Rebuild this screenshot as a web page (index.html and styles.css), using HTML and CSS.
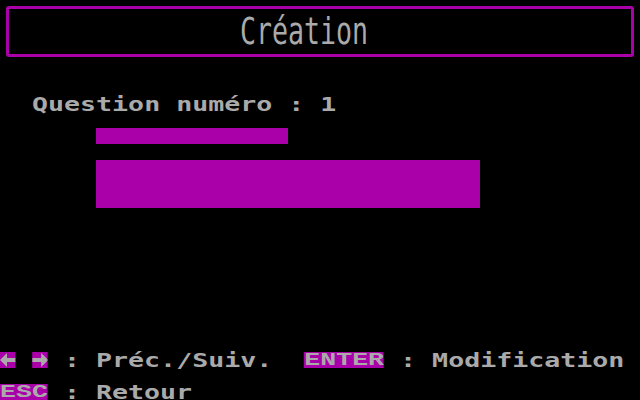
FILE: index.html
```html
<!DOCTYPE html>
<html lang="fr">
<head>
  <meta charset="UTF-8">
  <title>Création</title>
  <link rel="stylesheet" href="styles.css">
</head>
<body>
  <div class="title-box">
    <span class="title">Création</span>
  </div>

  <div class="row question">  Question numéro : 1</div>
  <div class="bar bar-short"></div>
  <div class="bar bar-long"></div>

  <footer class="help">
    <div class="row"><span class="key"><svg viewBox="0 0 16 16" preserveAspectRatio="none"><rect x="3" y="6" width="13" height="4"/><polygon points="0,8 7,1 7,15"/></svg></span> <span class="key"><svg viewBox="0 0 16 16" preserveAspectRatio="none"><rect x="0" y="6" width="13" height="4"/><polygon points="16,8 9,1 9,15"/></svg></span> : Préc./Suiv.  <span class="key">ENTER</span> : Modification</div>
    <div class="row"><span class="key">ESC</span> : Retour</div>
  </footer>
</body>
</html>
```

FILE: styles.css
```css
body {
  margin: 0;
  width: 640px;
  height: 400px;
  overflow: hidden;
  background-color: #000;
  color: #aaa;
  display: flex;
  flex-direction: column;
}
.title-box {
  margin: 6px 6px 0;
  height: 51px;
  box-sizing: border-box;
  border: 3px solid #a0a;
  border-radius: 3px;
  padding-left: 231px;
}
.title {
  display: inline-block;
  font-family: "DejaVu Sans Mono", monospace;
  font-size: 38px;
  line-height: 45px;
  transform: scaleX(0.7);
  transform-origin: left;
}
/* one text line = 16px, chars stretched to 16px cells (40 columns) */
.row {
  width: 457px;
  height: 16px;
  line-height: 16px;
  font-family: "DejaVu Sans Mono", monospace;
  font-weight: bold;
  font-size: 19px;
  white-space: pre;
  transform: scaleX(1.4);
  transform-origin: left;
}
.question {
  margin-top: 39px;
}
.bar {
  margin: 16px 0 0 96px;
  background-color: #a0a;
}
.bar-short {
  width: 192px;
  height: 16px;
}
.bar-long {
  width: 384px;
  height: 48px;
}
.help {
  margin-top: auto;
  display: flex;
  flex-direction: column;
  gap: 16px;
}
.key {
  display: inline-block;
  vertical-align: top;
  height: 16px;
  line-height: 17px;
  background-color: #a0a;
  font-family: "Liberation Mono", monospace;
}
.key svg {
  display: block;
  width: 11.43px;
  height: 16px;
  fill: #aaa;
}
```
